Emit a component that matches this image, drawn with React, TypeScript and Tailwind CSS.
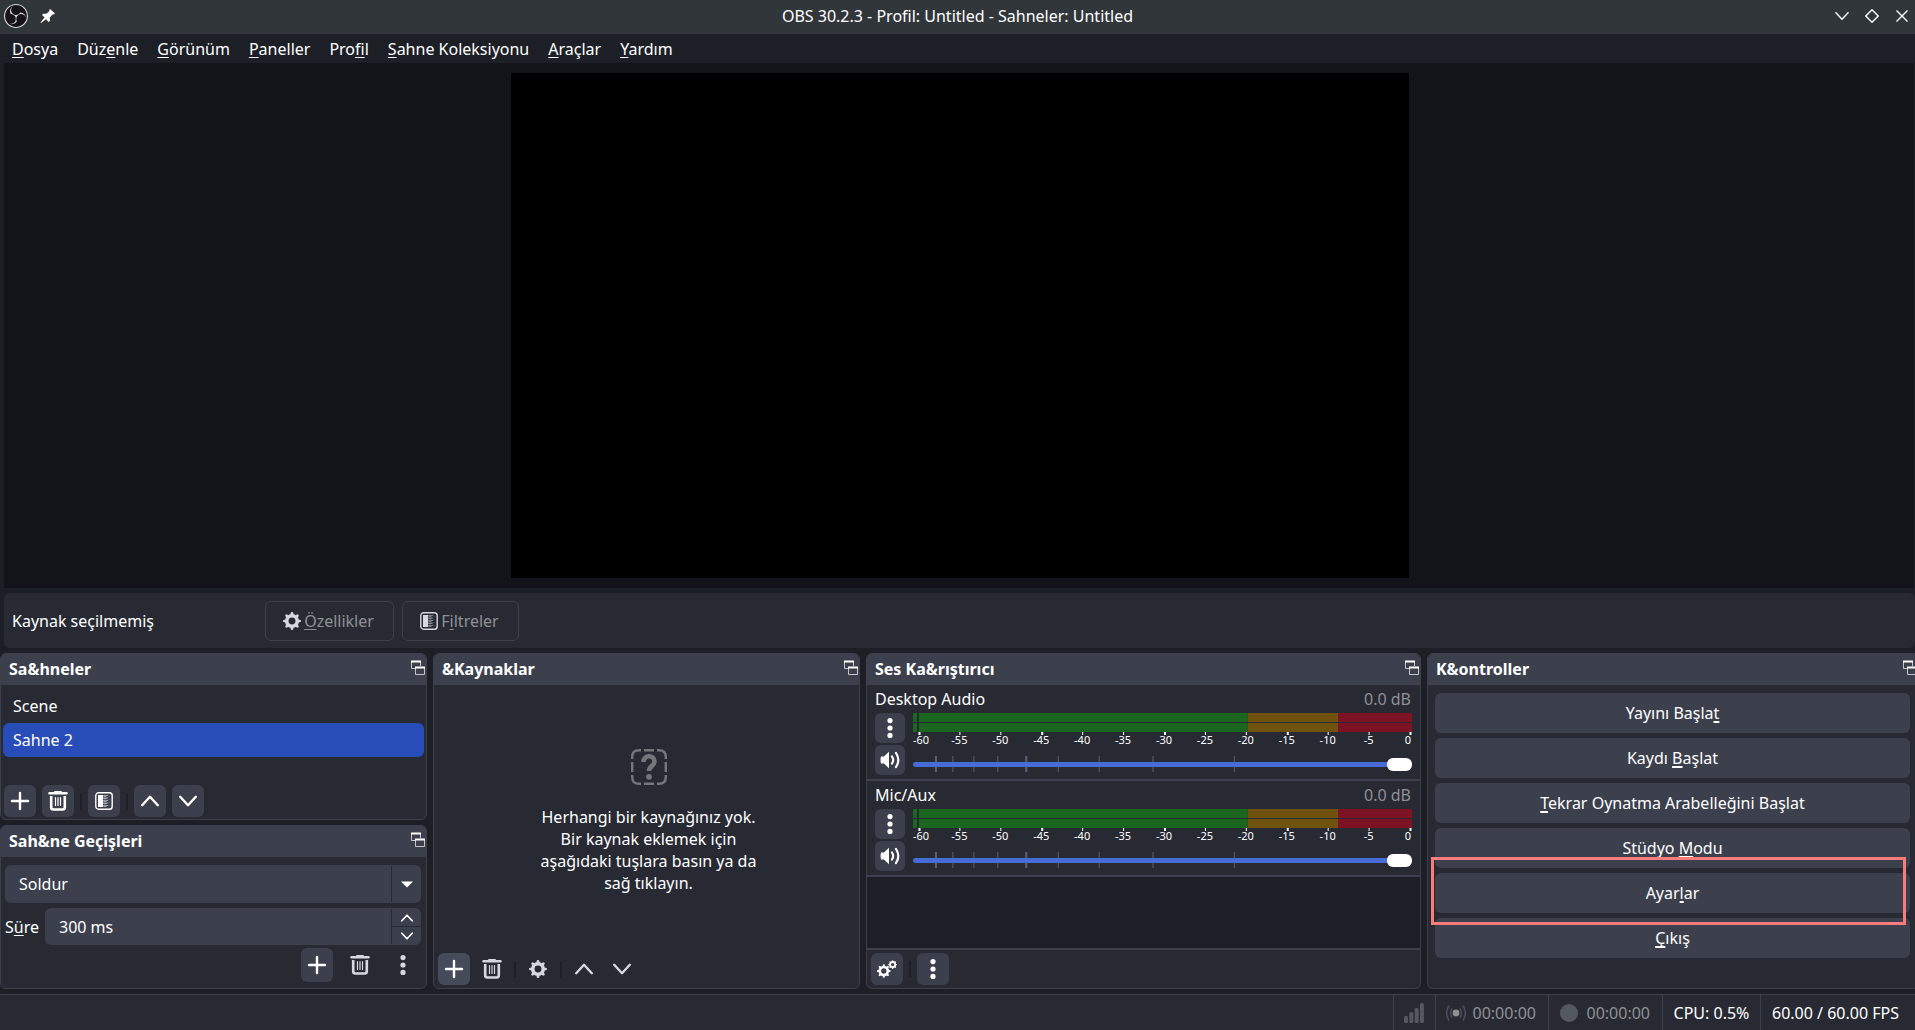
import { useState } from 'react'
import type { ReactNode } from 'react'
import clsx from 'clsx'
import { SiObsstudio } from 'react-icons/si'

const menus = ['_Dosya', 'Düz_enle', '_Görünüm', '_Paneller', 'Pro_fil', '_Sahne Koleksiyonu', '_Araçlar', '_Yardım']
const scenes = ['Scene', 'Sahne 2']
const controls = ['Yayını Başla_t', 'Kaydı _Başlat', '_Tekrar Oynatma Arabelleğini Başlat', 'Stüdyo _Modu', 'Ayar_lar', '_Çıkış']

// meter scale: label + position in percent of the bar width
const dbMarks = Array.from({ length: 13 }, (_, i) => ({ label: String(-60 + i * 5), pos: 1.1 + i * 8.2 }))
const faderTicks = [4.4, 7.9, 12.1, 16.9, 22.5, 29, 37.2, 48, 64.3]

// "_" marks the accelerator letter
function Mnemonic({ text, thick }: { text: string; thick?: boolean }) {
  const i = text.indexOf('_')
  if (i < 0) return <>{text}</>
  return (
    <span className="whitespace-pre">
      {text.slice(0, i)}
      <span className={clsx('underline underline-offset-2 [text-decoration-skip-ink:none]', thick ? 'decoration-2' : 'decoration-1')}>
        {text[i + 1]}
      </span>
      {text.slice(i + 2)}
    </span>
  )
}

/* icons */
function PlusIcon() {
  return (
    <svg width="20" height="20" viewBox="0 0 20 20" fill="none" stroke="currentColor" strokeWidth="2.4" strokeLinecap="round">
      <path d="M10 2v16M2 10h16" />
    </svg>
  )
}

function TrashIcon() {
  return (
    <svg width="20" height="20" viewBox="0 0 20 20" fill="none" stroke="currentColor">
      <path d="M1.5 2.2h17" strokeWidth="2.4" strokeLinecap="round" />
      <path d="M7 1h6" strokeWidth="2" strokeLinecap="round" />
      <path d="M3.2 5v11.2q0 2.3 2.3 2.3h9q2.3 0 2.3-2.3V5" strokeWidth="2.6" />
      <path d="M7.5 6.5v8M10 6.5v8M12.5 6.5v8" strokeWidth="1.2" strokeLinecap="round" />
    </svg>
  )
}

function FilterIcon() {
  return (
    <svg width="18" height="18" viewBox="0 0 18 18">
      <rect x="0.8" y="0.8" width="16.4" height="16.4" rx="2.8" fill="none" stroke="currentColor" strokeWidth="1.4" />
      <path d="M3 3h5v12H3z" fill="currentColor" />
      <path d="M9 3v12M11 3v12" stroke="currentColor" strokeWidth="1.4" strokeDasharray="1.5 1" opacity="0.7" />
      <path d="M10 4v11M12.5 3v12" stroke="currentColor" strokeWidth="1.2" strokeDasharray="1 1.5" opacity="0.5" />
      <path d="M14 4v10" stroke="currentColor" strokeWidth="1" strokeDasharray="1 2" opacity="0.25" />
    </svg>
  )
}

function Gear({ cx, cy, r }: { cx: number; cy: number; r: number }) {
  return (
    <g stroke="currentColor" fill="none">
      <circle cx={cx} cy={cy} r={r * 0.59} strokeWidth={r * 0.4} />
      {[0, 45, 90, 135, 180, 225, 270, 315].map((a) => (
        <path key={a} d={`M${cx} ${cy - r * 0.72}V${cy - r * 0.86}`} strokeWidth={r * 0.3} strokeLinecap="round" transform={`rotate(${a} ${cx} ${cy})`} />
      ))}
    </g>
  )
}

function GearIcon() {
  return (
    <svg width="18" height="18" viewBox="0 0 18 18"><Gear cx={9} cy={9} r={8.9} /></svg>
  )
}

function GearsIcon() {
  return (
    <svg width="20" height="18" viewBox="0 0 20 18">
      <Gear cx={6.8} cy={11} r={6.8} />
      <Gear cx={15.6} cy={4.6} r={4.4} />
    </svg>
  )
}

function Chevron({ up, size = 18, width = 2.4 }: { up?: boolean; size?: number; width?: number }) {
  return (
    <svg width={size} height={size} viewBox="0 0 18 18" fill="none" stroke="currentColor" strokeWidth={width} strokeLinecap="round" strokeLinejoin="round">
      <path d={up ? 'M1.2 13.2L9 4.8l7.8 8.4' : 'M1.2 4.8L9 13.2l7.8-8.4'} />
    </svg>
  )
}

function DotsIcon() {
  return (
    <svg width="6" height="20" viewBox="0 0 6 20" fill="currentColor">
      <circle cx="3" cy="2.6" r="2.6" />
      <circle cx="3" cy="10" r="2.6" />
      <circle cx="3" cy="17.4" r="2.6" />
    </svg>
  )
}

function SpeakerIcon() {
  return (
    <svg width="20" height="18" viewBox="0 0 20 18" fill="none" stroke="currentColor" strokeLinecap="round">
      <path d="M1 5.5h3L9 .8v16.4l-5-4.7H1q-1-3.5 0-7z" fill="currentColor" stroke="none" />
      <path d="M12 5.5q2.4 3.5 0 7" strokeWidth="2.2" />
      <path d="M16 2q4.6 7 0 14" strokeWidth="2.2" />
    </svg>
  )
}

function DetachIcon() {
  return (
    <svg width="16" height="16" viewBox="0 0 16 16" fill="none" stroke="#c4c6cc">
      <path d="M5 8.500H1.500V1.500h9V6M5.500 7.500v7h9v-7" />
      <path d="M1 1.500h10M5 7.500h10" stroke="#fff" strokeWidth="2.2" />
    </svg>
  )
}

function PinIcon() {
  return (
    <svg width="16" height="16" viewBox="0 0 16 16" fill="#fff">
      <path d="M10 1l5 4.500-1.300 1-.9-.2-3 3.200.2 3.200-1.400 1.200L6 11.200 1 15l-.5-.5L4.600 9.600 2 7l1.200-1.300 3.200.1L9.500 3 9.200 2z" />
    </svg>
  )
}

/* shared parts */
function IconButton({ label, flat, active, className, children }: {
  label: string; flat?: boolean; active?: boolean; className?: string; children: ReactNode
}) {
  return (
    <button aria-label={label}
      className={clsx('grid h-8 w-8 shrink-0 place-items-center rounded-md hover:bg-[#464b59]',
        flat ? 'text-[#d5d8e0]' : active ? 'bg-[#464b59]' : 'bg-[#3c404d]', className)}>
      {children}
    </button>
  )
}

function Divider() {
  return <span className="h-4 w-0.5 bg-[#1d1f26]" />
}

function Dock({ title, className, children }: { title: string; className?: string; children: ReactNode }) {
  return (
    <section className={clsx('flex min-w-0 flex-col overflow-hidden rounded-md border border-[#3c404d] bg-[#272a33]', className)}>
      <header className="flex h-[31px] shrink-0 items-center justify-between bg-[#3c404d] pb-0.5 pl-2">
        <h2 className="font-bold">{title}</h2>
        <button aria-label={`${title} ayır`} className="mb-0.5"><DetachIcon /></button>
      </header>
      {children}
    </section>
  )
}

function Meter() {
  return (
    <svg className="block h-8 w-full overflow-visible" fontSize="11" fill="#fff">
      <rect width="67.1%" height="19" fill="#1a661e" />
      <rect x="67.1%" width="18.1%" height="19" fill="#70520f" />
      <rect x="85.2%" width="14.8%" height="19" fill="#7c1224" />
      <rect y="9" width="100%" height="1" fill="#272a33" />
      <rect x="0.8%" width="2" height="19" fill="#272a33" />
      {dbMarks.map(({ label, pos }, i) => (
        <g key={label}>
          <rect x={`${pos}%`} y="19" width={i % 3 ? 1 : 2} height="3" />
          <text x={i === 12 ? '99.8%' : i === 0 ? '0%' : `${pos}%`} y="31" textAnchor={i === 12 ? 'end' : i === 0 ? 'start' : 'middle'}>
            {label}
          </text>
        </g>
      ))}
    </svg>
  )
}

function MixerChannel({ name }: { name: string }) {
  const [volume, setVolume] = useState(100)
  return (
    <div className="h-24 border-b-2 border-[#3c404d] bg-[#272a33] px-2">
      <div className="flex h-7 items-center justify-between pr-px">
        <span>{name}</span>
        <span className="text-[#8f9094]">0.0 dB</span>
      </div>
      <div className="flex gap-2">
        <div className="flex flex-col gap-0.5">
          <button aria-label={`${name} seçenekleri`} className="grid h-[30px] w-[30px] place-items-center rounded-md bg-[#3c404d]"><DotsIcon /></button>
          <button aria-label={`${name} sustur`} className="grid h-[30px] w-[30px] place-items-center rounded-md bg-[#3c404d]"><SpeakerIcon /></button>
        </div>
        <div className="min-w-0 flex-1">
          <Meter />
          <div className="mt-[11px] grid">
            <svg className="col-start-1 row-start-1 h-4 w-full" fill="#5b6273">
              {faderTicks.map((t, i) => <rect key={t} x={`${t}%`} width={i === 0 || i === 4 ? 2 : 1} height="16" />)}
            </svg>
            <input type="range" aria-label={name} value={volume} onChange={(e) => setVolume(Number(e.target.value))}
              className="col-start-1 row-start-1 h-4 w-full appearance-none bg-transparent [&::-webkit-slider-runnable-track]:h-[5px] [&::-webkit-slider-runnable-track]:rounded-sm [&::-webkit-slider-runnable-track]:bg-[#476bd7] [&::-webkit-slider-thumb]:-mt-1 [&::-webkit-slider-thumb]:h-[13px] [&::-webkit-slider-thumb]:w-[25px] [&::-webkit-slider-thumb]:appearance-none [&::-webkit-slider-thumb]:rounded-md [&::-webkit-slider-thumb]:bg-white" />
          </div>
        </div>
      </div>
    </div>
  )
}

export default function App() {
  const [scene, setScene] = useState('Sahne 2')

  return (
    <div className="flex h-screen flex-col overflow-hidden bg-[#1d1f26] font-['Noto_Sans','Open_Sans',sans-serif] text-[16px] leading-[22px] text-white">
      {/* title bar */}
      <header className="grid h-[34px] shrink-0 grid-cols-[1fr_auto_1fr] items-center bg-[#31363b] px-1 pb-0.5">
        <div className="flex items-center gap-3">
          <span className="rounded-full bg-[#16131a]"><SiObsstudio size={24} color="#d9d9d9" /></span>
          <PinIcon />
        </div>
        <h1>OBS 30.2.3 - Profil: Untitled - Sahneler: Untitled</h1>
        <div className="flex items-center justify-end gap-4 pr-0.5">
          <button aria-label="Küçült"><Chevron size={14} width={1.8} /></button>
          <button aria-label="Büyüt">
            <svg width="14" height="14" viewBox="0 0 14 14" fill="none" stroke="#fff" strokeWidth="1.4"><path d="M7 .8L13.200 7 7 13.200.8 7z" /></svg>
          </button>
          <button aria-label="Kapat" className="px-px">
            <svg width="12" height="12" viewBox="0 0 12 12" fill="none" stroke="#fff" strokeWidth="1.4"><path d="M.5.5l11 11M11.500.5l-11 11" /></svg>
          </button>
        </div>
      </header>

      {/* menu */}
      <nav className="flex h-[29px] shrink-0 items-center gap-[19px] px-3">
        {menus.map((m) => <button key={m}><Mnemonic text={m} /></button>)}
      </nav>

      {/* preview */}
      <main className="mr-px ml-1 flex min-h-0 flex-1 justify-center bg-[#13141a] py-2.5 pl-0.5">
        <div className="aspect-video h-full bg-black" />
      </main>

      {/* source toolbar */}
      <div className="mt-[5px] ml-1 flex h-[55px] shrink-0 items-center rounded-md bg-[#272a33] px-2">
        <span className="w-[253px]">Kaynak seçilmemiş</span>
        <div className="flex gap-2 text-[#8f9094]">
          <button className="flex h-10 w-[129px] items-center justify-center gap-[3px] rounded-md border border-[#3c404d] pr-0.5">
            <span className="text-[#d5d8e0]"><GearIcon /></span>
            <Mnemonic text="_Özellikler" />
          </button>
          <button className="flex h-10 w-[117px] items-center justify-center gap-[3px] rounded-md border border-[#3c404d] pr-0.5">
            <span className="text-[#d5d8e0]"><FilterIcon /></span>
            <Mnemonic text="F_iltreler" />
          </button>
        </div>
      </div>

      {/* docks */}
      <div className="mt-[5px] grid h-[336px] shrink-0 grid-cols-[427fr_427fr_555fr_488fr] gap-1.5">
        <div className="flex min-w-0 flex-col gap-[5px]">
          <Dock title="Sa&hneler" className="flex-1">
            <ul className="flex-1 px-0.5 pt-1">
              {scenes.map((s) => (
                <li key={s}>
                  <button onClick={() => setScene(s)}
                    className={clsx('block h-[34px] w-full rounded-md px-2.5 text-left', s === scene && 'bg-[#284cb8]')}>
                    {s}
                  </button>
                </li>
              ))}
            </ul>
            <div className="flex items-center gap-1.5 px-[3px] pb-0.5">
              <IconButton label="Sahne ekle"><PlusIcon /></IconButton>
              <IconButton label="Sahneyi sil"><TrashIcon /></IconButton>
              <Divider />
              <IconButton label="Sahne filtreleri"><FilterIcon /></IconButton>
              <Divider />
              <IconButton label="Yukarı taşı"><Chevron up /></IconButton>
              <IconButton label="Aşağı taşı"><Chevron /></IconButton>
            </div>
          </Dock>

          <Dock title="Sah&ne Geçişleri">
            <div className="flex flex-col gap-[5px] px-1 pt-2 pb-1.5">
              <div className="mr-px grid h-[38px] rounded-md bg-[#3c404d]">
                <select aria-label="Geçiş" className="col-start-1 row-start-1 appearance-none rounded-md pl-3.5">
                  <option>Soldur</option>
                </select>
                <span className="pointer-events-none col-start-1 row-start-1 my-px grid w-[30px] place-items-center justify-self-end border-l border-[#272a33]">
                  <svg width="12" height="7" viewBox="0 0 12 7" fill="#fff"><path d="M0 .5h12L6 6.500z" /></svg>
                </span>
              </div>
              <div className="mr-px flex items-center">
                <label htmlFor="duration" className="w-10"><Mnemonic text="S_üre" /></label>
                <div className="flex h-[37px] min-w-0 flex-1 rounded-md bg-[#3c404d]">
                  <input id="duration" defaultValue="300 ms" className="min-w-0 flex-1 bg-transparent pl-3.5 outline-none" />
                  <div className="my-px grid w-[30px] border-l border-[#272a33]">
                    <button aria-label="Artır" className="grid place-items-center border-b border-[#272a33]"><Chevron up size={12} /></button>
                    <button aria-label="Azalt" className="grid place-items-center"><Chevron size={12} /></button>
                  </div>
                </div>
              </div>
              <div className="-mt-0.5 flex justify-end gap-[11px] pr-[3px]">
                <IconButton label="Geçiş ekle" className="h-[34px]"><PlusIcon /></IconButton>
                <IconButton label="Geçişi sil" flat className="h-[34px]"><TrashIcon /></IconButton>
                <IconButton label="Geçiş özellikleri" flat className="h-[34px]"><DotsIcon /></IconButton>
              </div>
            </div>
          </Dock>
        </div>

        <Dock title="&Kaynaklar">
          <div className="flex flex-1 flex-col items-center justify-center gap-[21px] pt-[5px] pl-1 text-center">
            <svg width="36" height="36" viewBox="0 0 36 36" fill="none" stroke="#74767c">
              <path d="M1.200 10V8q0-6.800 6.800-6.800h2M13 1.200h10M26 1.200h2q6.800 0 6.800 6.800v2M34.800 13v10M34.800 26v2q0 6.800-6.800 6.800h-2M23 34.800H13M10 34.800H8q-6.800 0-6.800-6.800v-2M1.200 23V13" strokeWidth="2.4" />
              <path d="M12.500 13C12.500 5.500 23.500 5.500 23.500 12.500c0 4.500-5.500 4.500-5.500 9.500" strokeWidth="4.6" />
              <circle cx="18" cy="27.800" r="2.9" fill="#74767c" stroke="none" />
            </svg>
            <p className="w-[230px]">Herhangi bir kaynağınız yok. Bir kaynak eklemek için aşağıdaki tuşlara basın ya da sağ tıklayın.</p>
          </div>
          <div className="flex items-center gap-1.5 px-1 pb-[3px]">
            <IconButton label="Kaynak ekle" active><PlusIcon /></IconButton>
            <IconButton label="Kaynağı sil" flat><TrashIcon /></IconButton>
            <Divider />
            <IconButton label="Kaynak özellikleri" flat><GearIcon /></IconButton>
            <Divider />
            <IconButton label="Yukarı taşı" flat><Chevron up /></IconButton>
            <IconButton label="Aşağı taşı" flat><Chevron /></IconButton>
          </div>
        </Dock>

        <Dock title="Ses Ka&rıştırıcı">
          <div className="flex-1 bg-[#1d1f26]">
            <MixerChannel name="Desktop Audio" />
            <MixerChannel name="Mic/Aux" />
          </div>
          <div className="flex items-center gap-1.5 border-t-2 border-[#3c404d] px-1 py-[3px]">
            <IconButton label="Gelişmiş ses özellikleri"><GearsIcon /></IconButton>
            <Divider />
            <IconButton label="Karıştırıcı menüsü"><DotsIcon /></IconButton>
          </div>
        </Dock>

        <Dock title="K&ontroller" className="-mr-1">
          <div className="flex flex-col gap-[5px] py-2 pr-2 pl-[7px]">
            {controls.map((c) => (
              <div key={c} className="relative">
                <button className="block h-10 w-full rounded-md bg-[#3c404d] hover:bg-[#464b59]"><Mnemonic text={c} thick /></button>
                {c === 'Ayar_lar' && (
                  <span className="pointer-events-none absolute -top-4 right-1 -bottom-3 -left-1 z-10 border-3 border-[#f87c7c]" />
                )}
              </div>
            ))}
          </div>
        </Dock>
      </div>

      {/* status bar */}
      <footer className="mt-[5px] flex h-9 shrink-0 justify-end border-t border-[#3c404d] bg-[#272a33] text-[#8f9094]">
        <div className="flex w-[42px] items-center justify-center border-l border-[#3c404d] pr-0.5">
          <svg width="20" height="20" viewBox="0 0 20 20" fill="#545861">
            <rect y="13" width="4" height="7" rx="1.5" />
            <rect x="5.300" y="9" width="4" height="11" rx="1.5" />
            <rect x="10.600" y="5" width="4" height="15" rx="1.5" />
            <rect x="15.900" y="0" width="4" height="20" rx="1.5" />
          </svg>
        </div>
        <div className="flex w-[113px] items-center justify-between border-l border-[#3c404d] pr-3 pl-2.5">
          <svg width="20" height="18" viewBox="0 0 20 18" fill="none" stroke="#4a4e59" strokeWidth="1.6">
            <circle cx="10" cy="9" r="3.4" fill="#8f9094" stroke="none" />
            <path d="M6 4.500q-3 4.500 0 9M14 4.500q3 4.500 0 9M3 1.500q-4.500 7.500 0 15M17 1.500q4.500 7.500 0 15" />
          </svg>
          <span>00:00:00</span>
        </div>
        <div className="flex w-[114px] items-center justify-between border-l border-[#3c404d] pr-3 pl-[11px]">
          <span className="h-[18px] w-[18px] rounded-full bg-[#545861]" />
          <span>00:00:00</span>
        </div>
        <div className="flex w-[98px] items-center justify-center border-l border-[#3c404d] text-white">CPU: 0.5%</div>
        <div className="flex w-[155px] items-center border-l border-[#3c404d] pl-[11px] whitespace-nowrap text-white">60.00 / 60.00 FPS</div>
      </footer>
    </div>
  )
}
